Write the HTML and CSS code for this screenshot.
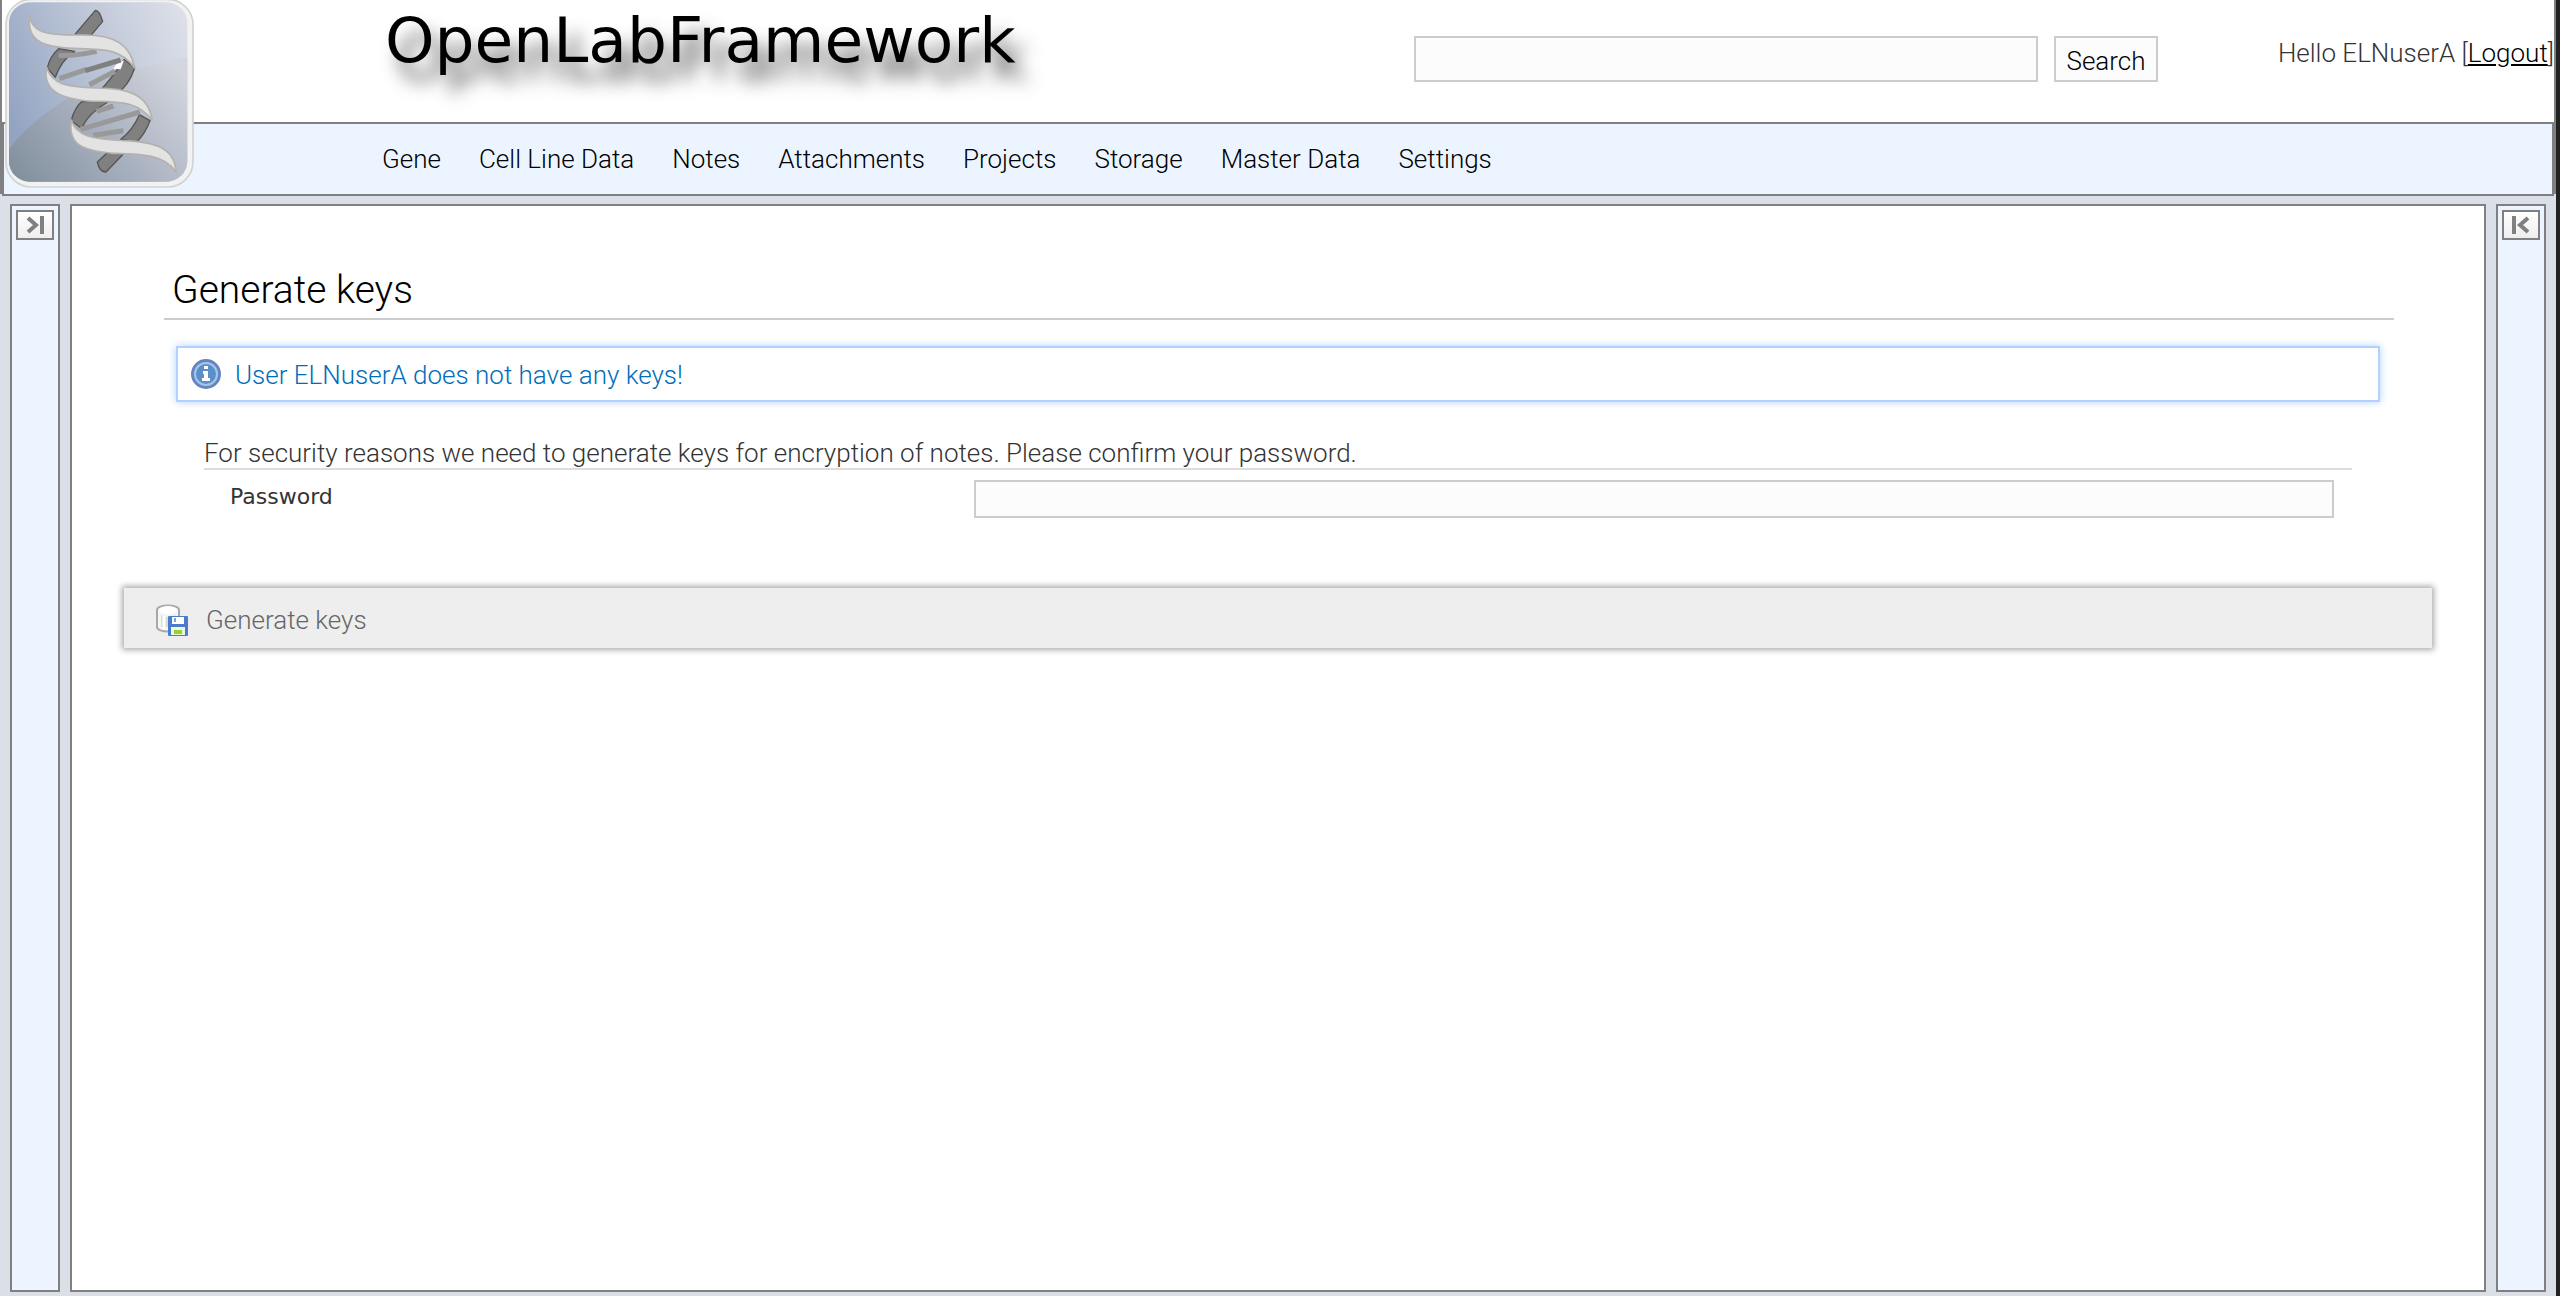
FILE: index.html
```html
<!DOCTYPE html>
<html lang="en">
<head>
<meta charset="utf-8">
<title>OpenLabFramework</title>
<link rel="stylesheet" href="styles.css">
</head>
<body>
<div class="page">
  <header class="header">
    <a class="logo" href="#" aria-label="Home">
      <svg viewBox="15 -6 567 570" aria-hidden="true">
        <defs>
          <linearGradient id="sky" x1="0" y1="0.6" x2="1" y2="0.2">
            <stop offset="0" stop-color="#93a4c2"/>
            <stop offset="0.5" stop-color="#bac4d6"/>
            <stop offset="1" stop-color="#dcdfe8"/>
          </linearGradient>
          <linearGradient id="ground" x1="0" y1="0.8" x2="1" y2="0.2">
            <stop offset="0" stop-color="#83919f"/>
            <stop offset="0.5" stop-color="#aab2c1"/>
            <stop offset="1" stop-color="#d3d6de"/>
          </linearGradient>
          <clipPath id="tile"><rect x="27" y="7" width="535" height="538" rx="62"/></clipPath>
        </defs>
        <rect x="18" y="-2" width="561" height="563" rx="76" fill="#f2f2f2" stroke="#d2d2d2" stroke-width="5"/>
        <g clip-path="url(#tile)">
          <rect x="20" y="0" width="550" height="550" fill="url(#sky)"/>
          <path d="M20 455C130 310 320 210 570 172V560H20Z" fill="url(#ground)"/>
        </g>
        <g fill="#808080" stroke="#555" stroke-width="4" stroke-linejoin="round">
          <path d="M286 31Q298 30 308 64L268 112L212 118Z"/>
          <path d="M176 146L224 154Q184 180 166 232L142 204Q150 168 176 146Z"/>
          <path d="M372 178L404 204Q386 260 346 284L296 276Q340 230 372 178Z"/>
          <path d="M246 304L324 306Q260 344 246 386L214 362Q222 326 246 304Z"/>
          <path d="M418 344L450 362Q436 400 410 426L362 418Q400 388 418 344Z"/>
          <path d="M322 458L370 462L318 516Q298 516 292 486Z"/>
        </g>
        <path d="M350 192L372 180L362 208L340 206Z" fill="#fff"/>
        <g fill="none" stroke="#999" stroke-width="15">
          <path d="M176 166Q230 168 290 154"/><path d="M178 236L260 208"/><path d="M268 254L345 214"/>
          <path d="M290 334L340 318"/><path d="M242 388L420 336"/><path d="M280 406L370 392"/>
          <path d="M256 212L362 180" stroke="#808080"/>
        </g>
        <g fill="#e3e3e3" stroke="#b5b1ac" stroke-width="5" stroke-linejoin="round">
          <path d="M90 46C94 106 164 106 250 105C350 104 392 138 404 204C366 150 320 148 240 146C150 144 74 134 90 46Z"/>
          <path d="M140 202C156 254 200 260 290 264C380 264 446 282 456 360C414 304 360 306 280 304C180 298 126 270 140 202Z"/>
          <path d="M214 360C232 416 290 416 370 422C460 426 524 440 528 516C492 462 420 462 340 460C254 452 202 438 214 360Z"/>
        </g>
      </svg>
    </a>
    <div class="masthead">
      <div class="title">OpenLabFramework</div>
      <form class="search">
        <input class="field" type="search" aria-label="Search terms">
        <button class="search-button" type="button">Search</button>
      </form>
      <div class="user">Hello ELNuserA [<a href="#">Logout</a>]</div>
    </div>
    <nav class="nav">
      <a href="#">Gene</a>
      <a href="#">Cell Line Data</a>
      <a href="#">Notes</a>
      <a href="#">Attachments</a>
      <a href="#">Projects</a>
      <a href="#">Storage</a>
      <a href="#">Master Data</a>
      <a href="#">Settings</a>
    </nav>
  </header>
  <div class="columns">
    <aside class="side">
      <button class="toggle" type="button" aria-label="Expand left panel">
        <svg viewBox="0 0 34 26" aria-hidden="true"><path d="M10 6L18 13L10 20M24 4V22"/></svg>
      </button>
    </aside>
    <main class="content">
      <h1>Generate keys</h1>
      <div class="message" role="status">
        <svg class="info" viewBox="0 0 30 30" aria-hidden="true">
          <circle cx="15" cy="15" r="14" fill="#5c8dc8" stroke="#6b83b8" stroke-width="2"/>
          <circle cx="15" cy="15" r="11" fill="#5b8fca" stroke="#a5c8ea" stroke-width="2"/>
          <path d="M13 7H17V10H13ZM12 12H17V19H19V22H11V19H13V15H12Z" fill="#fff"/>
        </svg>
        <span>User ELNuserA does not have any keys!</span>
      </div>
      <form class="keys">
        <p class="intro">For security reasons we need to generate keys for encryption of notes. Please confirm your password.</p>
        <div class="row">
          <label for="password">Password</label>
          <input class="field" id="password" type="password">
        </div>
        <div class="actions">
          <button class="save" type="button">
            <svg viewBox="0 0 32 32" aria-hidden="true">
              <path d="M1 6C1 0 23 0 23 6V23C23 29 1 29 1 23Z" fill="#f5f5f5" stroke="#a8a8a8" stroke-width="2"/>
              <ellipse cx="12" cy="6" rx="9" ry="4" fill="#fff"/>
              <path d="M5 11Q12 15 19 11V23H5Z" fill="#dcdcdc"/>
              <path d="M8 12V25" stroke="#fff" stroke-width="3"/>
              <rect x="12" y="12" width="20" height="20" rx="1" fill="#4a7ccc"/>
              <rect x="16" y="13" width="12" height="7" fill="#fff"/>
              <rect x="18" y="14" width="2" height="4" fill="#7f9fd6"/>
              <rect x="15" y="23" width="14" height="8" fill="#eef7e4"/>
              <rect x="18" y="26" width="8" height="4" fill="#91d42c"/>
            </svg>
            <span>Generate keys</span>
          </button>
        </div>
      </form>
    </main>
    <aside class="side">
      <button class="toggle" type="button" aria-label="Expand right panel">
        <svg viewBox="0 0 34 26" aria-hidden="true"><path d="M10 4V22M24 6L16 13L24 20"/></svg>
      </button>
    </aside>
  </div>
</div>
</body>
</html>
```
FILE: styles.css
```css
* {
  box-sizing: border-box;
}

body {
  margin: 0;
  background: #222;
  color: #333;
  font: 300 26px/32px Roboto, "Liberation Sans", sans-serif;
}

button,
input {
  font: inherit;
  margin: 0;
}

.page {
  display: flex;
  flex-direction: column;
  min-height: 100vh;
  margin-right: 4px;
  background: #dbdfe8;
}

.header {
  position: relative;
  border: solid #808080;
  border-width: 0 2px;
  background: #fff;
}

.logo {
  position: absolute;
  top: -2px;
  left: 3px;
  width: 189px;
}

.logo svg {
  display: block;
}

.masthead {
  display: grid;
  grid-template-columns: 1412fr 744fr 396fr;
  height: 122px;
}

.title {
  padding-left: 383px;
  color: #000;
  font: 63px/82px "DejaVu Sans", sans-serif;
  text-shadow: 12px 18px 18px rgba(0, 0, 0, 0.7);
}

.search {
  display: flex;
  gap: 16px;
  height: 82px;
  padding-top: 36px;
}

.field {
  min-width: 0;
  border: 2px solid #ccc;
  border-radius: 0;
  background: #fcfcfc;
  outline: none;
}

.search .field {
  flex: 1;
}

.search-button {
  width: 104px;
  padding: 4px 0 0;
  border: 2px solid #ccc;
  background: #fcfcfc;
  color: #000;
}

.user {
  padding-top: 37px;
  text-align: right;
  white-space: nowrap;
}

.user a {
  color: #000;
}

.nav {
  display: flex;
  gap: 38px;
  align-items: center;
  height: 74px;
  margin-bottom: -2px;
  padding-left: 378px;
  border: 2px solid #808080;
  background: #ecf5ff;
}

.nav a {
  color: #000;
  text-decoration: none;
}

.columns {
  display: flex;
  flex: 1;
  gap: 10px;
  padding: 10px 10px 4px;
}

.side {
  width: 50px;
  padding: 4px;
  border: 2px solid #808080;
  background: #ecf5ff;
}

.toggle {
  display: block;
  width: 38px;
  height: 30px;
  padding: 0;
  border: 2px solid #808080;
  background: linear-gradient(#fff, #eee);
}

.toggle svg {
  display: block;
  fill: none;
  stroke: #808080;
  stroke-width: 4;
}

.content {
  flex: 1;
  padding: 56px 52px;
  border: 2px solid #808080;
  background: #fff;
}

h1 {
  margin: 0 38px 26px 40px;
  padding: 6px 8px;
  border-bottom: 2px solid #ccc;
  color: #000;
  font-size: 39px;
  font-weight: 300;
  line-height: 44px;
}

.message {
  display: flex;
  gap: 14px;
  align-items: center;
  height: 56px;
  margin: 0 52px;
  padding: 0 13px;
  border: 2px solid #b2d1ff;
  box-shadow: 0 0 8px #b2d1ff;
  color: #006dba;
}

.message span {
  padding-top: 2px;
}

.info {
  width: 30px;
}

.intro {
  margin: 34px 80px 10px;
  padding-top: 2px;
  border-bottom: 2px solid #ddd;
  line-height: 30px;
}

.row {
  display: grid;
  grid-template-columns: 35fr 64fr;
  margin: 0 98px 70px 106px;
}

.row label {
  font: 22px/34px "DejaVu Sans", sans-serif;
}

.row .field {
  height: 38px;
}

.actions {
  display: flex;
  height: 60px;
  padding-left: 32px;
  background: #eee;
  box-shadow: 0 0 6px 2px #aaa;
}

.save {
  display: flex;
  gap: 18px;
  align-items: center;
  padding: 4px 0 0;
  border: 0;
  background: none;
  color: #666;
}

.save svg {
  width: 32px;
}
```
